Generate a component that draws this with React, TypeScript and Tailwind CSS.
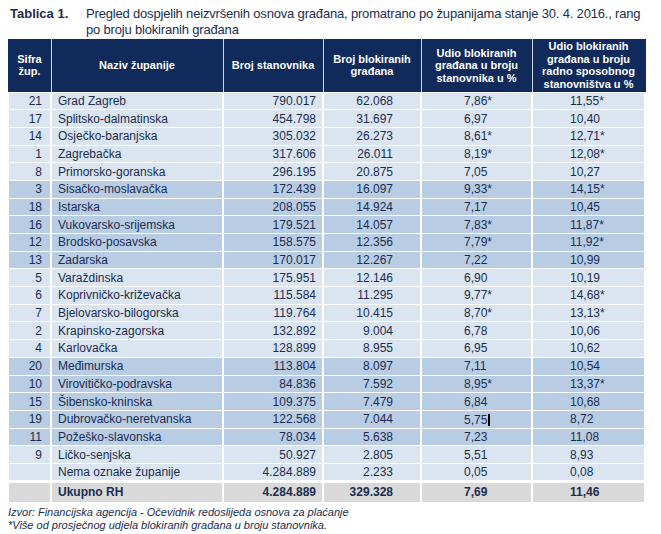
const rows: [string, string, string, string, string, string, "L" | "D"][] = [
  ["21", "Grad Zagreb", "790.017", "62.068", "7,86*", "11,55*", "L"],
  ["17", "Splitsko-dalmatinska", "454.798", "31.697", "6,97", "10,40", "L"],
  ["14", "Osječko-baranjska", "305.032", "26.273", "8,61*", "12,71*", "L"],
  ["1", "Zagrebačka", "317.606", "26.011", "8,19*", "12,08*", "L"],
  ["8", "Primorsko-goranska", "296.195", "20.875", "7,05", "10,27", "L"],
  ["3", "Sisačko-moslavačka", "172.439", "16.097", "9,33*", "14,15*", "D"],
  ["18", "Istarska", "208.055", "14.924", "7,17", "10,45", "D"],
  ["16", "Vukovarsko-srijemska", "179.521", "14.057", "7,83*", "11,87*", "D"],
  ["12", "Brodsko-posavska", "158.575", "12.356", "7,79*", "11,92*", "D"],
  ["13", "Zadarska", "170.017", "12.267", "7,22", "10,99", "D"],
  ["5", "Varaždinska", "175.951", "12.146", "6,90", "10,19", "L"],
  ["6", "Koprivničko-križevačka", "115.584", "11.295", "9,77*", "14,68*", "L"],
  ["7", "Bjelovarsko-bilogorska", "119.764", "10.415", "8,70*", "13,13*", "L"],
  ["2", "Krapinsko-zagorska", "132.892", "9.004", "6,78", "10,06", "L"],
  ["4", "Karlovačka", "128.899", "8.955", "6,95", "10,62", "L"],
  ["20", "Međimurska", "113.804", "8.097", "7,11", "10,54", "D"],
  ["10", "Virovitičko-podravska", "84.836", "7.592", "8,95*", "13,37*", "D"],
  ["15", "Šibensko-kninska", "109.375", "7.479", "6,84", "10,68", "D"],
  ["19", "Dubrovačko-neretvanska", "122.568", "7.044", "5,75", "8,72", "D"],
  ["11", "Požeško-slavonska", "78.034", "5.638", "7,23", "11,08", "D"],
  ["9", "Ličko-senjska", "50.927", "2.805", "5,51", "8,93", "L"],
  ["", "Nema oznake županije", "4.284.889", "2.233", "0,05", "0,08", "L"],
];

const td = "border-x-2 border-y border-white p-0 leading-none";
const tot = "border-x-2 border-t-[3px] border-white p-0";

export default function App() {
  return (
    <div className="min-h-[534px] w-[661px] bg-white text-[#1a2d50] font-['Liberation_Sans',Arial,sans-serif]">
      {/* naslov tablice */}
      <div className="flex pl-[10px] pt-[6px] text-[13px] leading-[16px]">
        <div className="w-[76px] shrink-0 font-bold">Tablica 1.</div>
        <div className="whitespace-nowrap tracking-[-0.18px]">
          Pregled dospjelih neizvršenih osnova građana, promatrano po županijama stanje 30. 4. 2016., rang
          <br />
          po broju blokiranih građana
        </div>
      </div>

      <table className="ml-[7px] mt-[1px] w-[637px] table-fixed border-collapse text-[12px]">
        <colgroup>
          <col className="w-[43px]" />
          <col className="w-[172px]" />
          <col className="w-[100px]" />
          <col className="w-[98px]" />
          <col className="w-[111px]" />
          <col className="w-[113px]" />
        </colgroup>
        <thead>
          <tr className="h-[53px] bg-[#0f2a5b] text-center text-[11px] font-bold leading-[12.5px] text-white">
            <th className="border-x border-b border-white/80 border-l-[#0f2a5b]">
              Sifra
              <br />
              žup.
            </th>
            <th className="border-x border-b border-white/80">Naziv županije</th>
            <th className="border-x border-b border-white/80">Broj stanovnika</th>
            <th className="border-x border-b border-white/80">
              Broj blokiranih
              <br />
              građana
            </th>
            <th className="border-x border-b border-white/80">
              Udio blokiranih
              <br />
              građana u broju
              <br />
              stanovnika u %
            </th>
            <th className="border-x border-b border-white/80 border-r-[#0f2a5b]">
              Udio blokiranih
              <br />
              građana u broju
              <br />
              radno sposobnog
              <br />
              stanovništva u %
            </th>
          </tr>
        </thead>
        <tbody>
          {rows.map((r) => (
            <tr key={r[1]} className={"h-[17.7px] " + (r[6] === "L" ? "bg-[#dbe5f1]" : "bg-[#b8cce4]")}>
              <td className={td + " pr-[8px] text-right"}>{r[0]}</td>
              <td className={td + " pl-[6px]"}>{r[1]}</td>
              <td className={td + " pr-[6px] text-right"}>{r[2]}</td>
              <td className={td + " pr-[27px] text-right"}>{r[3]}</td>
              <td className={td + " pl-[42px]"}>
                {r[4]}
                {r[1] === "Dubrovačko-neretvanska" && (
                  <span className="ml-px inline-block h-[12px] w-[2px] translate-y-[2px] bg-black" />
                )}
              </td>
              <td className={td + " pl-[37px]"}>{r[5]}</td>
            </tr>
          ))}
          <tr className="h-[21px] bg-[#d9d9d9] font-bold">
            <td className={tot} />
            <td className={tot + " pl-[6px]"}>Ukupno RH</td>
            <td className={tot + " pr-[6px] text-right"}>4.284.889</td>
            <td className={tot + " pr-[27px] text-right"}>329.328</td>
            <td className={tot + " pl-[42px]"}>7,69</td>
            <td className={tot + " pl-[37px]"}>11,46</td>
          </tr>
        </tbody>
      </table>

      <div className="mt-[4px] pl-[8px] text-[11px] italic leading-[13px]">
        <p>Izvor: Financijska agencija - Očevidnik redoslijeda osnova za plaćanje</p>
        <p>*Više od prosječnog udjela blokiranih građana u broju stanovnika.</p>
      </div>
    </div>
  );
}
